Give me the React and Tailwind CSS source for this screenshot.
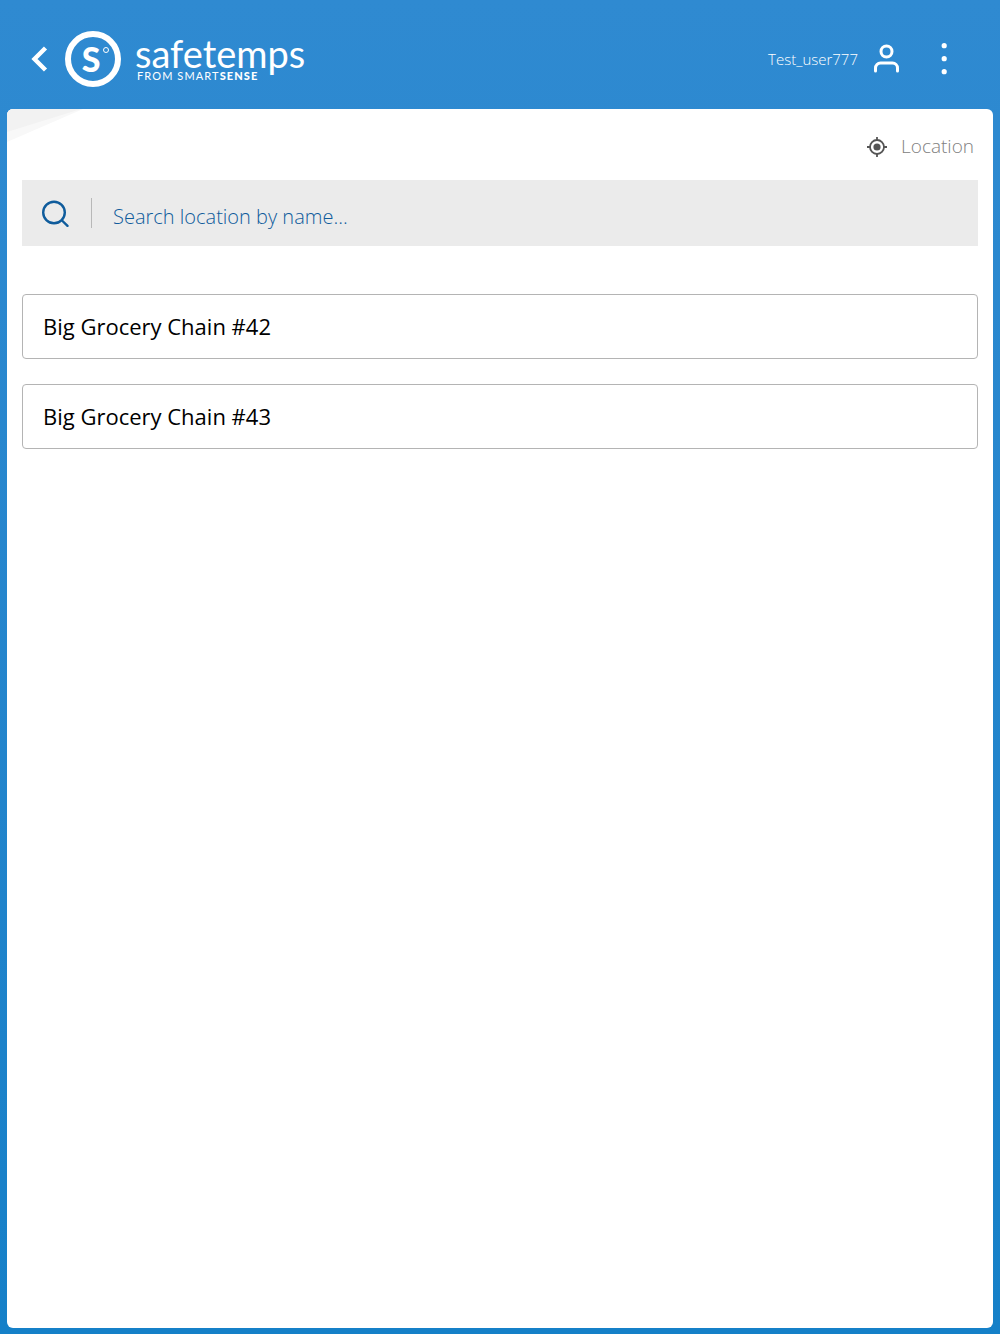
import React, { useMemo, useState } from "react";

const LOCATIONS = [
  { id: 42, name: "Big Grocery Chain #42" },
  { id: 43, name: "Big Grocery Chain #43" },
];

function Logo() {
  return (
    <div className="flex items-center gap-3.5 text-white">
      <div className="relative flex h-14 w-14 items-center justify-center rounded-full border-6 border-white pr-1">
        <span className="font-['Lato',sans-serif] text-[34px] leading-none font-black">S</span>
        <span className="absolute top-2.5 right-1.5 h-1.5 w-1.5 rounded-full border border-white" />
      </div>
      <div className="font-['Lato',sans-serif] whitespace-nowrap">
        <div className="text-[38px] leading-[34px]">safetemps</div>
        <div className="pl-0.5 text-[11px] leading-3 tracking-widest">
          FROM SMART<span className="font-black">SENSE</span>
        </div>
      </div>
    </div>
  );
}

function Header() {
  return (
    <header className="flex h-[109px] items-center justify-between pt-2 pr-9 pl-[23px]">
      <div className="flex items-center gap-2.5">
        <button type="button" aria-label="Back" className="flex h-10 w-8 items-center justify-center text-white">
          <svg width="20" height="28" viewBox="0 0 20 28" fill="none" stroke="currentColor" strokeWidth="4.4">
            <path d="M16.5 3 5.5 14l11 11" />
          </svg>
        </button>
        <Logo />
      </div>
      <div className="flex items-center text-white">
        <button type="button" className="flex items-center gap-3.5">
          <span className="pt-0.5 text-[15px] font-light">Test_user777</span>
          <svg width="28" height="30" viewBox="0 0 28 30" fill="none" stroke="currentColor" strokeWidth="3" strokeLinecap="round">
            <circle cx="14.5" cy="7.5" r="5.5" />
            <path d="M3.5 27v-3a5 5 0 0 1 5-5h12a5 5 0 0 1 5 5v3" />
          </svg>
        </button>
        <button type="button" aria-label="More options" className="ml-6 flex h-10 w-10 items-center justify-center">
          <svg width="6" height="32" viewBox="0 0 6 32" fill="currentColor">
            <circle cx="3.2" cy="2.7" r="2.6" />
            <circle cx="3.2" cy="15.7" r="2.6" />
            <circle cx="3.2" cy="28.7" r="2.6" />
          </svg>
        </button>
      </div>
    </header>
  );
}

export default function App() {
  const [query, setQuery] = useState("");

  const filtered = useMemo(
    () => LOCATIONS.filter((l) => l.name.toLowerCase().includes(query.trim().toLowerCase())),
    [query]
  );

  return (
    <div className="flex min-h-screen flex-col bg-linear-to-b from-[#2f8ad1] to-[#1580c8] font-['Open_Sans',sans-serif]">
      <Header />

      <main className="relative mx-[7px] mb-1.5 flex-1 overflow-hidden rounded-md bg-white px-[15px]">
        {/* folded corner */}
        <svg className="absolute top-0 left-0" width="76" height="34" viewBox="0 0 76 34" aria-hidden="true">
          <path d="M0 0h76L0 33z" fill="#f8f8f8" />
          <path d="M0 0h74L0 23z" fill="#f2f2f2" />
        </svg>

        <div className="flex h-[71px] items-center justify-end pt-1 pr-1">
          <button type="button" className="flex items-center gap-3.5 text-[19px] font-light text-[#808080]">
            <svg width="20" height="20" viewBox="0 0 20 20" fill="none" stroke="#555555" strokeWidth="1.8">
              <circle cx="10" cy="10" r="7" />
              <circle cx="10" cy="10" r="3.6" fill="#555555" stroke="none" />
              <path d="M10 0v3M10 17v3M0 10h3M17 10h3" />
            </svg>
            Location
          </button>
        </div>

        <label className="flex h-[66px] items-center bg-[#ebebeb] px-5 text-[#0f5c9c]">
          <svg className="shrink-0" width="28" height="28" viewBox="0 0 28 28" fill="none" stroke="currentColor" strokeWidth="2.4" strokeLinecap="round">
            <circle cx="12" cy="13.5" r="10.8" />
            <path d="m20 21.5 5.5 5.3" />
          </svg>
          <span className="ml-[21px] h-[30px] w-px bg-[#b8b8b8]" />
          <input
            type="text"
            aria-label="Search location by name"
            placeholder="Search location by name..."
            value={query}
            onChange={(e) => setQuery(e.target.value)}
            className="ml-[21px] h-10 flex-1 bg-transparent pt-1.5 text-xl font-light outline-none placeholder:text-[#0f5c9c]"
          />
        </label>

        <ul className="mt-12 flex flex-col gap-[25px]">
          {filtered.map((l) => (
            <li key={l.id}>
              <button type="button" className="flex h-[65px] w-full items-center rounded border border-[#b4b4b4] px-5 text-left text-[22px] text-black">
                {l.name}
              </button>
            </li>
          ))}
        </ul>
      </main>
    </div>
  );
}
